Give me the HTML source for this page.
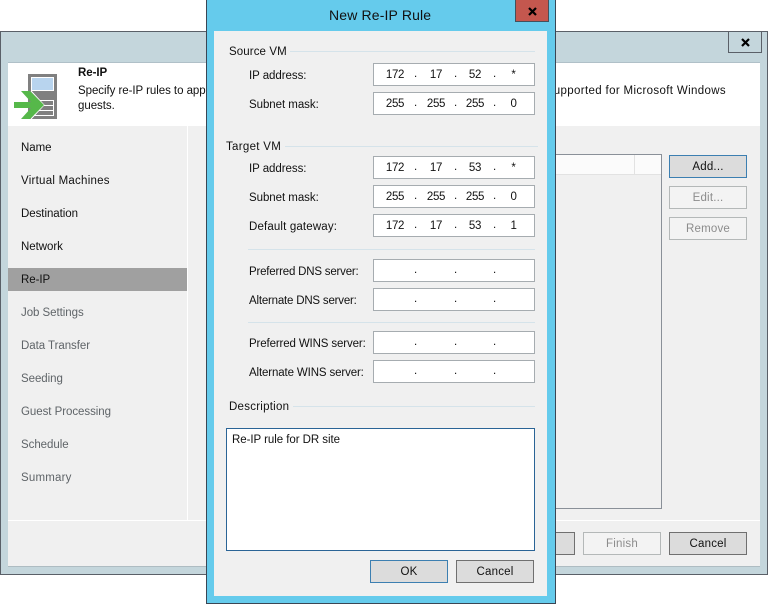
<!DOCTYPE html>
<html><head><meta charset="utf-8"><style>
html,body{margin:0;padding:0;width:768px;height:604px;overflow:hidden;background:#fff}
body{position:relative;font-family:"Liberation Sans",sans-serif;font-size:11.5px;color:#000}
div{position:absolute;box-sizing:border-box}
.t{position:absolute;white-space:nowrap;line-height:14px;letter-spacing:-.05px;color:#111}
.g{color:#5f6468}
.i{background:#fff;border:1px solid #a6acb0;width:162px;height:23px;left:373px}
.i span{position:absolute;top:4px;line-height:14px;width:30px;text-align:center;letter-spacing:-.3px;color:#111}
.a{left:6px}.b{left:47px}.c{left:86px}.d{left:124.5px}
.i b{position:absolute;font-weight:normal;top:3px;line-height:14px;color:#111}
.p{left:40px}.q{left:80px}.r{left:119px}
.btn{height:23px;width:78px;text-align:center;line-height:22px;background:#dcdcdc;border:1px solid #707070;color:#111;letter-spacing:.2px}
.dis{background:#f3f3f3;border-color:#b4b8b8;color:#8c8c8c}
.l{height:1px;background:#d5e3ea}
</style></head><body>
<div style="left:0;top:31px;width:768px;height:544px;background:#c4d6dc;border:1px solid #5a6068"></div>
<div style="left:728px;top:31px;width:34px;height:22px;border:1px solid #5a6068;border-top:0"></div>
<svg style="position:absolute;left:741px;top:38px" width="9" height="9"><path d="M1 1L8 8M8 1L1 8" stroke="#000" stroke-width="2.2" fill="none"/></svg>
<div style="left:8px;top:62px;width:752px;height:505px;background:#f0f0f0;border-top:1px solid #b0c0c8;border-bottom:1px solid #aebcc2"></div>
<div style="left:8px;top:63px;width:752px;height:63px;background:#fff"></div>
<svg style="position:absolute;left:0;top:0" width="70" height="125">
<rect x="28" y="74" width="29" height="45" fill="#808080"/>
<rect x="31.5" y="77.5" width="22" height="13" fill="#b8d4ee" stroke="#fff"/>
<rect x="34.5" y="100.5" width="19" height="15" fill="#808080" stroke="#fff"/>
<path d="M34 105.5H54M34 110.5H54" stroke="#fff"/>
<path d="M31 91L44 105L31 119" fill="none" stroke="#fff" stroke-width="1"/>
<path d="M14 102H31L21 91H30L44 105L30 119H21L31 108H14Z" fill="#56b84a"/>
</svg>
<span class="t" style="left:78px;top:66px;font-weight:bold">Re-IP</span>
<span class="t" style="left:78px;top:84px">Specify re-IP rules to apply to the replica VM.</span>
<span class="t" style="right:42px;top:84px;letter-spacing:.35px">supported for Microsoft Windows</span>
<span class="t" style="left:78px;top:99px">guests.</span>
<div style="left:187px;top:126px;width:1px;height:394px;background:#fff"></div>
<div style="left:8px;top:520px;width:752px;height:1px;background:#fff"></div>
<div style="left:8px;top:268px;width:179px;height:23px;background:#a0a0a0"></div>
<span class="t" style="left:21px;top:141px">Name</span>
<span class="t" style="left:21px;top:174px;letter-spacing:.25px">Virtual Machines</span>
<span class="t" style="left:21px;top:207px">Destination</span>
<span class="t" style="left:21px;top:240px">Network</span>
<span class="t" style="left:21px;top:273px">Re-IP</span>
<span class="t g" style="left:21px;top:306px">Job Settings</span>
<span class="t g" style="left:21px;top:339px">Data Transfer</span>
<span class="t g" style="left:21px;top:372px">Seeding</span>
<span class="t g" style="left:21px;top:405px">Guest Processing</span>
<span class="t g" style="left:21px;top:438px">Schedule</span>
<span class="t g" style="left:21px;top:471px;letter-spacing:.2px">Summary</span>
<div style="left:540px;top:154px;width:122px;height:355px;background:#f0f0f0;border:1px solid #8a9098"></div>
<div style="left:541px;top:155px;width:120px;height:20px;background:#fbfbfb;border-bottom:1px solid #e2e2e2"></div>
<div style="left:634px;top:155px;width:1px;height:20px;background:#e2e2e2"></div>
<div class="btn" style="left:669px;top:155px;border-color:#3c7fb1">Add...</div>
<div class="btn dis" style="left:669px;top:186px">Edit...</div>
<div class="btn dis" style="left:669px;top:217px">Remove</div>
<div class="btn" style="left:500px;top:532px;width:75px"></div>
<div class="btn dis" style="left:583px;top:532px">Finish</div>
<div class="btn" style="left:669px;top:532px">Cancel</div>

<div style="left:206px;top:-1px;width:350px;height:605px;background:#65cbec;border:1px solid #3a4654"></div>
<div style="left:515px;top:0;width:34px;height:22px;background:#c4574e;border:1px solid #44505c;border-top:0"></div>
<svg style="position:absolute;left:528px;top:7px" width="9" height="9"><path d="M1 1L8 8M8 1L1 8" stroke="#000" stroke-width="2.2" fill="none"/></svg>
<span class="t" style="left:329px;top:7px;font-size:14px;letter-spacing:.15px;line-height:16px">New Re-IP Rule</span>
<div style="left:214px;top:31px;width:333px;height:565px;background:#f0f0f0"></div>

<span class="t" style="left:229px;top:45px;letter-spacing:.1px">Source VM</span><div class="l" style="left:290px;top:51px;width:245px"></div>
<span class="t" style="left:249px;top:69px">IP address:</span>
<div class="i" style="top:63px"><span class="a">172</span><b class="p">.</b><span class="b">17</span><b class="q">.</b><span class="c">52</span><b class="r">.</b><span class="d">*</span></div>
<span class="t" style="left:249px;top:98px">Subnet mask:</span>
<div class="i" style="top:92px"><span class="a">255</span><b class="p">.</b><span class="b">255</span><b class="q">.</b><span class="c">255</span><b class="r">.</b><span class="d">0</span></div>

<span class="t" style="left:226px;top:140px;letter-spacing:.3px">Target VM</span><div class="l" style="left:285px;top:146px;width:253px"></div>
<span class="t" style="left:249px;top:162px">IP address:</span>
<div class="i" style="top:156px"><span class="a">172</span><b class="p">.</b><span class="b">17</span><b class="q">.</b><span class="c">53</span><b class="r">.</b><span class="d">*</span></div>
<span class="t" style="left:249px;top:191px">Subnet mask:</span>
<div class="i" style="top:185px"><span class="a">255</span><b class="p">.</b><span class="b">255</span><b class="q">.</b><span class="c">255</span><b class="r">.</b><span class="d">0</span></div>
<span class="t" style="left:249px;top:220px;letter-spacing:.15px">Default gateway:</span>
<div class="i" style="top:214px"><span class="a">172</span><b class="p">.</b><span class="b">17</span><b class="q">.</b><span class="c">53</span><b class="r">.</b><span class="d">1</span></div>

<div class="l" style="left:248px;top:249px;width:287px"></div>
<span class="t" style="left:249px;top:265px;letter-spacing:-.2px">Preferred DNS server:</span>
<div class="i" style="top:259px"><b class="p">.</b><b class="q">.</b><b class="r">.</b></div>
<span class="t" style="left:249px;top:294px;letter-spacing:-.2px">Alternate DNS server:</span>
<div class="i" style="top:288px"><b class="p">.</b><b class="q">.</b><b class="r">.</b></div>
<div class="l" style="left:248px;top:322px;width:287px"></div>
<span class="t" style="left:249px;top:337px;letter-spacing:-.13px">Preferred WINS server:</span>
<div class="i" style="top:331px"><b class="p">.</b><b class="q">.</b><b class="r">.</b></div>
<span class="t" style="left:249px;top:366px;letter-spacing:-.13px">Alternate WINS server:</span>
<div class="i" style="top:360px"><b class="p">.</b><b class="q">.</b><b class="r">.</b></div>

<span class="t" style="left:229px;top:400px;letter-spacing:.25px">Description</span><div class="l" style="left:293px;top:406px;width:242px"></div>
<div style="left:226px;top:428px;width:309px;height:123px;background:#fff;border:1px solid #2a6496"></div>
<span class="t" style="left:232px;top:433px">Re-IP rule for DR site</span>
<div class="btn" style="left:370px;top:560px;border-color:#3c7fb1">OK</div>
<div class="btn" style="left:456px;top:560px">Cancel</div>
</body></html>
